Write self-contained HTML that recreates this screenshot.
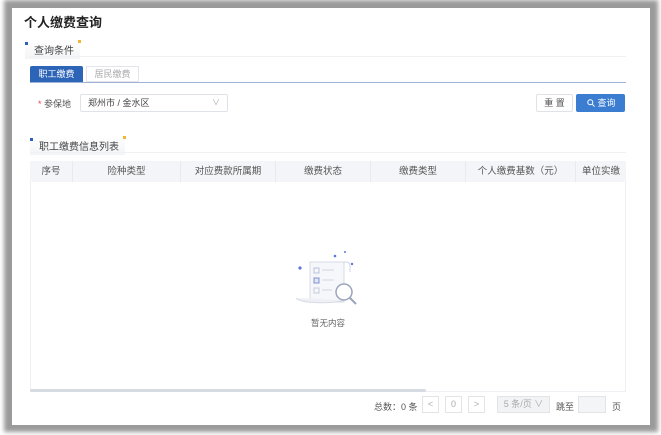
<!DOCTYPE html>
<html><head><meta charset="utf-8"><style>
*{box-sizing:border-box;margin:0;padding:0}
body{width:661px;height:435px;background:#fff;position:relative;overflow:hidden;font-family:"Liberation Sans","Noto Sans CJK SC",sans-serif;color:#333}
.frame{position:absolute;left:4px;top:0;width:654px;height:432px;background:#9a9a9a;filter:blur(2px)}
.panel{position:absolute;left:12px;top:8px;width:638px;height:417px;background:#fff}
.a{position:absolute;white-space:nowrap}
.sec{position:absolute;font-size:10px;color:#444;background:linear-gradient(#fff,#f3f4f6);padding:2px 6px 2px 9px}
.sec:before{content:"";position:absolute;left:0;top:2px;width:3px;height:3px;background:#2c5fb8}
.sec:after{content:"";position:absolute;right:-1px;top:0;width:3px;height:3px;background:#f2b632}
.th{position:absolute;top:161px;height:21px;line-height:21px;font-size:9.5px;color:#555;text-align:center;border-left:1px solid #e8eaee}
.pb{position:absolute;top:396px;height:17px;border:1px solid #e2e4e8;font-size:9px;color:#aaa;text-align:center;line-height:15px}
</style></head><body>
<div class="frame"></div>
<div class="panel"></div>
<div class="a" style="left:24px;top:12px;font-size:13px;font-weight:bold;color:#222">个人缴费查询</div>
<div class="sec" style="left:25px;top:40px">查询条件</div>
<div class="a" style="left:30px;top:56px;width:596px;height:1px;background:#f0f1f3"></div>
<div class="a" style="left:30px;top:66px;width:53px;height:16px;background:#2c64b8;color:#fff;font-size:9px;text-align:center;line-height:16px;border-radius:2px 2px 0 0">职工缴费</div>
<div class="a" style="left:86px;top:66px;width:53px;height:16px;border:1px solid #e3e5ea;color:#aaa;font-size:9px;text-align:center;line-height:14px">居民缴费</div>
<div class="a" style="left:30px;top:82px;width:596px;height:1px;background:#9fb3d6"></div>
<div class="a" style="left:38px;top:97px;font-size:9px;color:#555"><span style="color:#e44">*</span> 参保地</div>
<div class="a" style="left:80px;top:94px;width:148px;height:18px;border:1px solid #dfe2e7;border-radius:2px;font-size:9px;color:#444;padding-left:7px;line-height:16px">郑州市 / 金水区<span style="position:absolute;right:7px;color:#aaa;font-size:8px">∨</span></div>
<div class="a" style="left:536px;top:94px;width:37px;height:18px;border:1px solid #dfe2e7;border-radius:2px;font-size:9px;text-align:center;line-height:16px;color:#555">重 置</div>
<div class="a" style="left:576px;top:94px;width:49px;height:18px;background:#3b7dd1;border-radius:2px;font-size:9px;line-height:18px;color:#fff;padding-left:11px"><svg width="8" height="8" viewBox="0 0 8 8" style="vertical-align:-1px"><circle cx="3.3" cy="3.3" r="2.5" fill="none" stroke="#fff" stroke-width="1"/><path d="M5.2 5.2L7.5 7.5" stroke="#fff"/></svg> 查询</div>
<div class="sec" style="left:30px;top:136px">职工缴费信息列表</div>
<div class="a" style="left:30px;top:152px;width:596px;height:1px;background:#f0f1f3"></div>
<div class="a" style="left:30px;top:161px;width:596px;height:231px;border:1px solid #eef0f3;border-top:none"></div>
<div class="a" style="left:30px;top:161px;width:596px;height:21px;background:#f3f5f8"></div>
<div class="th" style="left:30px;width:42px;border:none">序号</div>
<div class="th" style="left:72px;width:108px">险种类型</div>
<div class="th" style="left:180px;width:95px">对应费款所属期</div>
<div class="th" style="left:275px;width:95px">缴费状态</div>
<div class="th" style="left:370px;width:95px">缴费类型</div>
<div class="th" style="left:465px;width:110px">个人缴费基数（元）</div>
<div class="th" style="left:575px;width:51px">单位实缴</div>
<svg class="a" style="left:290px;top:248px" width="74" height="64" viewBox="0 0 74 64">
<circle cx="10" cy="20" r="1.6" fill="#5a78d8"/><circle cx="45" cy="8" r="1.3" fill="#5a78d8"/><circle cx="62" cy="16" r="1.2" fill="#5a78d8"/><circle cx="55" cy="4" r="1" fill="#5a78d8"/>
<path d="M20 14h36c3 0 4 2 4 4v6" fill="none" stroke="#d0d6e3"/>
<rect x="20" y="14" width="34" height="40" fill="#f6f7fa" stroke="#d6dbe6"/>
<rect x="24" y="20" width="5" height="5" fill="none" stroke="#b9c2dc"/><rect x="24" y="30" width="5" height="5" fill="#e0e6f4" stroke="#7f92d0"/><rect x="24" y="40" width="5" height="5" fill="none" stroke="#c5cbd8"/>
<path d="M32 22h12M32 32h12M32 42h10" stroke="#d0d6e3"/>
<path d="M6 50c4 6 40 6 48 2" fill="#eef0f5" stroke="#d6dbe6"/>
<circle cx="54" cy="44" r="8" fill="#fff" stroke="#9aa4bb" stroke-width="1.5"/><path d="M60 50l6 6" stroke="#9aa4bb" stroke-width="2"/>
</svg>
<div class="a" style="left:311px;top:317px;font-size:8.5px;color:#666">暂无内容</div>
<div class="a" style="left:30px;top:389px;width:396px;height:3px;background:#d6dbe2;border-radius:2px"></div>
<div class="a" style="left:374px;top:400px;font-size:9px;color:#555">总数：0 条</div>
<div class="pb" style="left:422px;width:17px">&lt;</div>
<div class="pb" style="left:445px;width:17px">0</div>
<div class="pb" style="left:468px;width:17px">&gt;</div>
<div class="pb" style="left:497px;width:53px;background:#f2f3f5">5 条/页 ∨</div>
<div class="a" style="left:556px;top:400px;font-size:9px;color:#555">跳至</div>
<div class="pb" style="left:578px;width:28px;background:#f4f5f7"></div>
<div class="a" style="left:612px;top:400px;font-size:9px;color:#555">页</div>
</body></html>
